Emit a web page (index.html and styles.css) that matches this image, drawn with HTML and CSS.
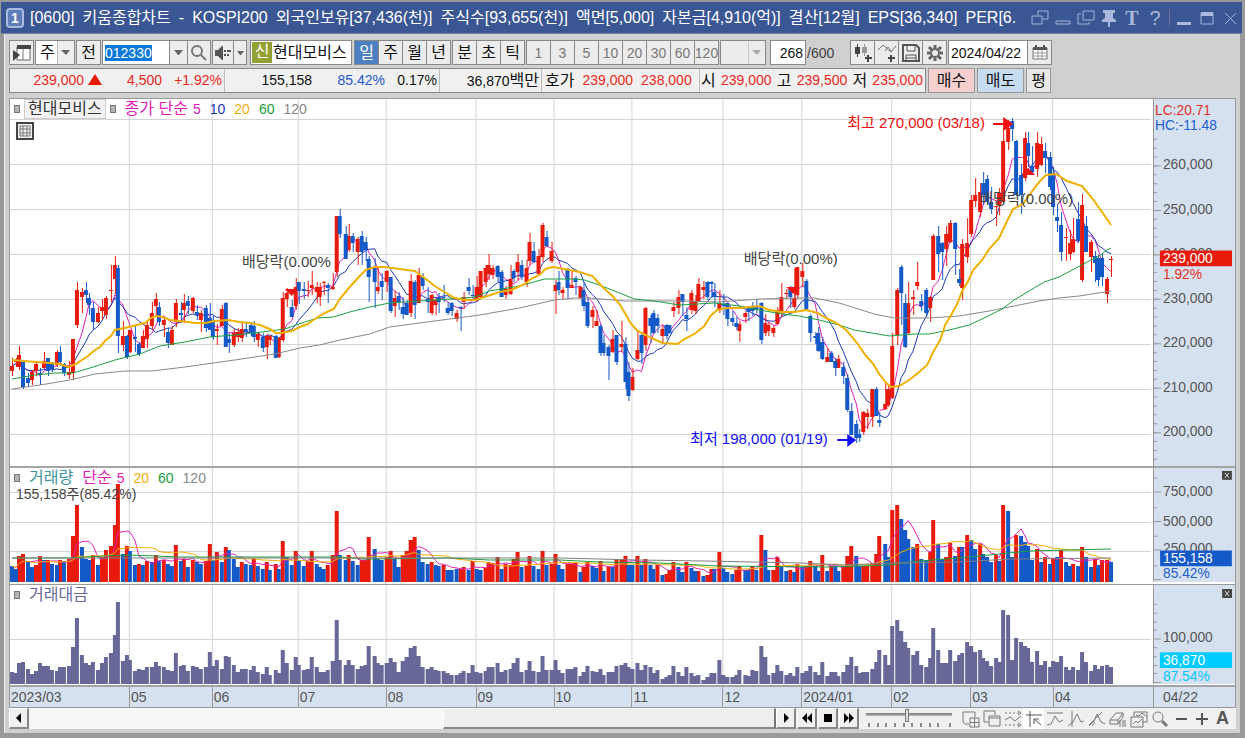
FILE: index.html
```html
<!DOCTYPE html>
<html lang="ko">
<head>
<meta charset="utf-8">
<title>[0600] 키움종합차트</title>
<link rel="stylesheet" href="styles.css">
</head>
<body>
<div class="window">
  <header class="titlebar">
    <span class="badge">1</span>
    <h1 class="title"><span>[0600]</span><span>키움종합차트</span><span>-</span><span>KOSPI200</span><span>외국인보유[37,436(천)]</span><span>주식수[93,655(천)]</span><span>액면[5,000]</span><span>자본금[4,910(억)]</span><span>결산[12월]</span><span>EPS[36,340]</span><span>PER[6.</span></h1>
    <div class="win-tools">
      <button aria-label="창 분리"><svg width="18" height="18" viewBox="0 0 18 18"><path d="M7 6V2h10v8h-5M1 7h10v8H1z"/></svg></button>
      <button aria-label="접기"><svg width="18" height="18" viewBox="0 0 18 18"><path d="M2 12h14v3H2z"/></svg></button>
      <button aria-label="창 복사"><svg width="18" height="18" viewBox="0 0 18 18"><path d="M6 2h11v9H6zM4 5H1v10h11v-2"/></svg></button>
      <button aria-label="고정"><svg width="18" height="18" viewBox="0 0 18 18"><path class="solid" d="M3 1h12v3h-2v5l3 2v2h-6v5H8v-5H2v-2l3-2V4H3z"/></svg></button>
      <button class="glyph serif">T</button>
      <button class="glyph">?</button>
      <span class="sep"></span>
      <button aria-label="최소화"><svg width="18" height="18" viewBox="0 0 18 18"><path class="solid" d="M2 13h14v3H2z"/></svg></button>
      <button aria-label="최대화"><svg width="18" height="18" viewBox="0 0 18 18"><path d="M3 4h12v11H3z"/><path class="solid" d="M3 3h12v4H3z"/></svg></button>
      <button aria-label="닫기"><svg width="18" height="18" viewBox="0 0 18 18"><path d="M4 4l11 11M15 4L4 15"/></svg></button>
    </div>
  </header>

  <main class="body">
    <div class="toolbar">
      <div class="group"><button class="w23" aria-label="패널"><svg width="20" height="18" viewBox="0 0 20 18"><path d="M5 3h13v13H5z" fill="#fff" stroke="#666"/><path d="M11 3v13" stroke="#777"/><path d="M5 1h14v4H5z" fill="#444"/><path d="M1 6l7 5-7 6z" fill="#444"/></svg></button></div>
      <div class="group combo"><select class="w38" aria-label="주기"><option>주</option></select><svg class="arrow" width="17" height="23" viewBox="0 0 17 23"><path d="M0 0h17v23H0z" fill="#efefef"/><path d="M0 0v23" stroke="#888"/><path d="M4 9h9l-4 5z" fill="#666"/></svg></div>
      <div class="group"><button class="w23">전</button></div>
      <div class="group">
        <input class="code" value="012330" aria-label="종목코드">
        <button class="w17" aria-label="목록"><svg width="11" height="10" viewBox="0 0 11 10"><path d="M1 2h9L6 7H5z" fill="#666"/></svg></button>
        <button class="w22" aria-label="검색"><svg width="18" height="18" viewBox="0 0 18 18" fill="none" stroke="#777" stroke-width="2"><circle cx="7" cy="7" r="5"/><path d="M11 11l5 5"/></svg></button>
      </div>
      <div class="group">
        <button class="w20" aria-label="소리"><svg width="18" height="16" viewBox="0 0 18 16"><path d="M1 5h3l4-4h1v14H8l-4-4H1z" fill="#555"/><path d="M11 5v2M11 9v2M14 5v2M14 9v2M16 5v2" stroke="#555" stroke-width="2"/></svg></button>
        <button class="w12" aria-label="소리 설정"><svg width="9" height="10" viewBox="0 0 9 10"><path d="M1 3h7L5 7H4z" fill="#666"/></svg></button>
      </div>
      <div class="group stock"><span class="new">신</span><span class="stock-name">현대모비스</span></div>
      <div class="group"><button class="w23 on">일</button><button class="w23">주</button><button class="w23">월</button><button class="w23">년</button></div>
      <div class="group"><button class="w23">분</button><button class="w23">초</button><button class="w23">틱</button></div>
      <div class="group nums"><button>1</button><button>3</button><button>5</button><button>10</button><button>20</button><button>30</button><button>60</button><button>120</button></div>
      <div class="group combo"><select class="w44" disabled aria-label="간격"><option></option></select><svg class="arrow" width="17" height="23" viewBox="0 0 17 23"><path d="M0 0v23" stroke="#aaa"/><path d="M4 9h9l-4 5z" fill="#aaa"/></svg></div>
      <div class="group count"><input value="268" aria-label="봉 개수"></div>
      <span class="total">/600</span>
      <div class="group">
        <button class="w23" aria-label="차트 추가"><svg width="20" height="20" viewBox="0 0 20 20"><path d="M2 4h5v7H2zM4 1h1v13H4z" fill="#444"/><path d="M9 4h5v6H9zM11 1h1v12h-1z" fill="#999"/><path d="M15 12v7M12 15h7" stroke="#444" stroke-width="2"/></svg></button>
        <button class="w23" aria-label="지표 추가"><svg width="20" height="20" viewBox="0 0 20 20"><path d="M1 7l5-5 8 7 5-6M8 8l3-4 4 5" fill="none" stroke="#777"/><path d="M14 12v7M11 15h7" stroke="#444" stroke-width="2"/></svg></button>
        <button class="w23" aria-label="저장"><svg width="20" height="20" viewBox="0 0 20 20" fill="none" stroke="#555" stroke-width="2"><path d="M2 2h13l3 3v13H2z"/><path d="M6 2v6h8V2M5 18v-6h10v6M5 15h10" stroke-width="1"/></svg></button>
        <button class="w23" aria-label="설정"><svg width="18" height="18" viewBox="0 0 18 18" fill="none" stroke="#666"><circle cx="9" cy="9" r="4" stroke-width="2"/><path d="M9 1v3M9 14v3M1 9h3M14 9h3M3 3l3 3M12 12l3 3M15 3l-3 3M6 12l-3 3" stroke-width="3"/></svg></button>
      </div>
      <div class="group"><input class="date" value="2024/04/22" aria-label="날짜"><button class="w23" aria-label="달력"><svg width="16" height="16" viewBox="0 0 16 16"><path d="M1 3h14v11H1z" fill="#fff" stroke="#777"/><path d="M1 8h14M1 11h14M6 5v9M10 5v9" fill="none" stroke="#999"/><path d="M1 2h14v3H1zM3 0h2v3H3zM11 0h2v3h-2z" fill="#555"/></svg></button></div>
    </div>

    <div class="quote-row">
      <div class="quote">
        <div class="seg seg-a up"><span>239,000 <i class="tri"></i></span><span>4,500</span><span>+1.92%</span></div>
        <div class="seg seg-b"><span>155,158</span><span class="down">85.42%</span><span>0.17%</span></div>
        <div class="seg seg-c"><span>36,870<b>백만</b></span></div>
        <div class="seg seg-d up"><b>호가</b><span>239,000</span><span>238,000</span></div>
        <div class="seg seg-e up"><b>시</b><span>239,000</span><b>고</b><span>239,500</span><b>저</b><span>235,000</span></div>
      </div>
      <button class="trade buy">매수</button>
      <button class="trade sell">매도</button>
      <button class="trade avg">평</button>
    </div>

    <section class="chart">
      <div class="plot">
        <svg id="price" height="367" viewBox="10 99 1144 367" preserveAspectRatio="none"></svg>
        <div class="legend"><i class="mark"></i><span class="boxed">현대모비스</span><i class="mark"></i><span class="ko c5">종가 단순</span><span class="c5 near">5</span><span class="c10">10</span><span class="c20">20</span><span class="c60">60</span><span class="c120">120</span></div>
        <button class="grid-btn" aria-label="표"><svg width="18" height="18" viewBox="0 0 18 18" fill="none" stroke="#444"><path d="M1 1h16v16H1z" stroke-width="2"/><path d="M4 4h10v10H4zM4 7h10M4 11h10M7 4v10M11 4v10" stroke="#777"/></svg></button>
        <span class="note high">최고 270,000 (03/18)</span>
        <span class="note low">최저 198,000 (01/19)</span>
        <span class="note ex1">배당락(0.00%</span>
        <span class="note ex2">배당락(0.00%)</span>
        <span class="note ex3">배당락(0.00%)</span>
      </div>
      <svg class="axis" id="price-axis" width="82" height="367" viewBox="0 99 82 367"></svg>

      <div class="plot line">
        <svg id="volume" height="116" viewBox="10 468 1144 116" preserveAspectRatio="none"></svg>
        <div class="legend"><i class="mark"></i><span class="ko vol">거래량</span><span class="ko c5">단순</span><span class="c5 near">5</span><span class="c20">20</span><span class="c60">60</span><span class="c120">120</span></div>
        <span class="vol-now">155,158주(85.42%)</span>
      </div>
      <svg class="axis line" id="volume-axis" width="82" height="116" viewBox="0 468 82 116"></svg>

      <div class="plot thin">
        <svg id="value" height="100" viewBox="10 585 1144 100" preserveAspectRatio="none"></svg>
        <div class="legend"><i class="mark"></i><span class="ko val">거래대금</span></div>
      </div>
      <svg class="axis thin" id="value-axis" width="82" height="100" viewBox="0 585 82 100"></svg>

      <div class="dates"><span>2023/03</span><span>05</span><span>06</span><span>07</span><span>08</span><span>09</span><span>10</span><span>11</span><span>12</span><span>2024/01</span><span>02</span><span>03</span><span>04</span></div>
      <div class="last-date">04/22</div>
    </section>

    <footer class="bottom">
      <button class="sb" aria-label="왼쪽"><svg width="8" height="10" viewBox="0 0 8 10"><path d="M6 0v10L1 5z"/></svg></button>
      <div class="track"><div class="thumb"></div></div>
      <button class="sb" aria-label="오른쪽"><svg width="8" height="10" viewBox="0 0 8 10"><path d="M2 0v10l5-5z"/></svg></button>
      <button class="sb" aria-label="뒤로"><svg width="12" height="10" viewBox="0 0 12 10"><path d="M6 0v10L1 5zM11 0v10L6 5z"/></svg></button>
      <button class="sb" aria-label="정지"><svg width="8" height="8" viewBox="0 0 8 8"><path d="M0 0h8v8H0z"/></svg></button>
      <button class="sb" aria-label="앞으로"><svg width="12" height="10" viewBox="0 0 12 10"><path d="M1 0v10l5-5zM6 0v10l5-5z"/></svg></button>
      <div class="speed"><input type="range" min="0" max="100" value="47" aria-label="속도"><svg width="86" height="5" viewBox="0 0 86 5"><path d="M3 0v4M12 0v4M20 0v4M29 0v4M38 0v4M46 0v4M55 0v4M64 0v4M72 0v4M84 0v4" stroke="#222"/></svg></div>
      <div class="tools">
        <button aria-label="새 차트"><svg width="18" height="18" viewBox="0 0 18 18"><path d="M7 14H3L1 12V2h12v5M8 8h9v9H8zM12.500 8v9M8 12.500h9"/></svg></button>
        <button aria-label="겹치기"><svg width="18" height="18" viewBox="0 0 18 18"><path d="M5 12H1V1h11v4M6 6h11v10H6zM6 8h11"/></svg></button>
        <button aria-label="영역"><svg width="18" height="18" viewBox="0 0 18 18"><path d="M1 3h16M1 15h16" stroke-dasharray="2 2"/><path d="M1 10l5-3 5 4 6-5M14 1l3 2-3 2M14 13l3 2-3 2"/></svg></button>
        <button class="pressed" aria-label="십자선"><svg width="18" height="18" viewBox="0 0 18 18"><path d="M1 5h16M5 1v16M16 15L9 9M9 14V9h5" stroke="#555"/></svg></button>
        <button aria-label="수평선"><svg width="18" height="18" viewBox="0 0 18 18"><path d="M1 3h16M1 15l4-1 4-8 4 6 4-2"/></svg></button>
        <button aria-label="수직선"><svg width="18" height="18" viewBox="0 0 18 18"><path d="M5 1v16M1 16l5-4 4-8 4 8 3-1"/></svg></button>
        <button aria-label="추세선"><svg width="18" height="18" viewBox="0 0 18 18"><path d="M1 15L14 2M1 16l5-5 3-7 4 8 4 2M4 16l3-4"/></svg></button>
        <button aria-label="지우개"><svg width="18" height="18" viewBox="0 0 18 18"><path d="M1 10l6-7h7l-5 7zM1 10v4h8v-4M9 14l5-7V3M11 10v7M14 10v7M16 10v7"/></svg></button>
        <button aria-label="차트 그림"><svg width="18" height="18" viewBox="0 0 18 18"><path d="M1 7h12v10H1zM4 7V2h13v10h-4M3 14l3-3 2 2 4-4M6 5l3 1 3-3 4 3"/></svg></button>
        <button aria-label="돋보기"><svg width="18" height="18" viewBox="0 0 18 18"><circle cx="7" cy="7" r="5"/><path d="M11 11l5 5" stroke-width="3"/></svg></button>
        <button aria-label="축소"><svg width="18" height="18" viewBox="0 0 18 18"><path d="M4 9h11" stroke="#555" stroke-width="2"/></svg></button>
        <button aria-label="확대"><svg width="18" height="18" viewBox="0 0 18 18"><path d="M3 9h12M9 3v12" stroke="#555" stroke-width="2"/></svg></button>
        <button class="auto">A</button>
      </div>
    </footer>
  </main>
</div>
<script src="chart.js"></script>
</body>
</html>
```
FILE: styles.css
```css
* { box-sizing: border-box; }
body { margin: 0; background: #989898; color: #111; font: 14px "Liberation Sans", "Noto Sans CJK KR", sans-serif; }
button, input, select { font: inherit; color: inherit; margin: 0; padding: 0; border-radius: 0; }
button { display: flex; align-items: center; justify-content: center; border: 0; background: none; }
svg { display: block; flex: none; }
b { font-weight: 400; }

.window { padding: 2px 0 5px; background: #999; }
.titlebar { display: flex; align-items: center; height: 32px; margin: 0 3px 0 1px; padding-left: 5px; background: #3a5693; color: #fff; border-bottom: 1px solid #7080a8; }
.badge { width: 18px; height: 20px; border: 2px solid #a9bbe0; border-radius: 4px; background: #5f7db8; font-weight: 700; line-height: 16px; text-align: center; flex: none; }
.title { display: flex; gap: 8px; flex: 1; min-width: 0; margin: 0 0 0 6px; font-size: 16px; font-weight: 400; line-height: 24px; white-space: nowrap; overflow: hidden; }
.title span { flex: none; }
.win-tools { display: flex; align-items: center; gap: 5px; padding: 0 3px 0 6px; color: #b0c0e2; }
.win-tools button { width: 18px; }
.win-tools svg { fill: none; stroke: #a3b3d8; }
.win-tools .solid { fill: #a9b8dc; stroke: none; }
.glyph { font-size: 20px; line-height: 22px; color: #a9b8dc; }
.serif { font-family: "Liberation Serif", serif; font-weight: 700; }
.sep { width: 1px; height: 18px; background: #776f98; }

.body { margin: 0 5px 0 4px; padding: 6px 4px 4px; background: #d0d0d0; border-left: 1px solid #eee; }
.toolbar { display: flex; align-items: center; gap: 1px; height: 25px; font-size: 16px; line-height: 20px; white-space: nowrap; }
.group { position: relative; display: flex; height: 25px; border: 1px solid #888; background: #888; gap: 1px; flex: none; }
.group button { background: #ececec; }
.group input { border: 0; background: #fff; outline: 0; }
.group select { border: 0; background: #fff; appearance: none; padding-left: 4px; }
.group select:disabled { background: #ececec; opacity: 1; }
.arrow { position: absolute; right: 0; top: 0; pointer-events: none; }
.w12 { width: 12px; } .w17 { width: 17px; } .w20 { width: 20px; } .w22 { width: 22px; }
.w23 { width: 23px; } .w38 { width: 38px; } .w44 { width: 44px; }
.group .code { width: 66px; color: #fff; font-size: 14px; background: linear-gradient(#0a78d8, #0a78d8) 2px 4px / 47px 16px no-repeat #fff; padding-left: 2px; }
.group.stock { background: #fff; width: 102px; margin: 0 1px 0 2px; align-items: center; overflow: hidden; }
.new { width: 20px; height: 21px; margin-left: 1px; background: #93a133; color: #fff; text-align: center; line-height: 20px; }
.group .on { background: #4d80c2; color: #fff; }
.nums button { width: 23px; color: #777; font-size: 14px; }
.group.count { margin-left: 3px; }
.count input { width: 34px; font-size: 14px; text-align: right; padding-right: 2px; }
.total { width: 42px; font-size: 14px; color: #444; }
.group .date { width: 78px; font-size: 14px; padding-left: 2px; }

.quote-row { display: flex; gap: 2px; height: 25px; margin-top: 3px; }
.quote { display: flex; width: 917px; background: #f0f0f0; border: 1px solid #888; line-height: 23px; white-space: nowrap; }
.seg { display: flex; flex: none; }
.seg + .seg { border-left: 1px solid #bbb; }
.seg span { text-align: right; flex: none; }
.seg b { color: #111; font-size: 16px; }
.up { color: #e8281a; }
.down { color: #2458d0; }
.tri { display: inline-block; border: 7px solid transparent; border-top: 0; border-bottom: 11px solid #e81808; }
.seg-a { width: 214px; }
.seg-a span { width: 92px; } .seg-a span + span { width: 60px; }
.seg-b { width: 215px; }
.seg-b span { width: 87px; } .seg-b span + span { width: 73px; } .seg-b span:last-child { width: 52px; }
.seg-c { width: 102px; justify-content: flex-end; padding-right: 2px; }
.seg-d { width: 158px; padding-left: 3px; gap: 8px; }
.seg-e { flex: 1; justify-content: space-between; padding: 0 2px 0 1px; }
.trade { width: 47px; border: 1px solid #999; font-size: 16px; line-height: 20px; }
.buy { background: #f5cfce; } .sell { background: #c6dcf0; } .avg { width: 25px; background: #e8e8e8; }

.chart { display: grid; grid-template-columns: 1fr 82px; margin-top: 5px; border: 1px solid #999; background: #fff; }
.plot { position: relative; min-width: 0; }
.plot > svg { width: 100%; }
.axis { background: #d6e1ef; border-left: 1px solid #999; font-size: 14px; }
.line, .dates, .last-date { border-top: 2px solid #a4a4a4; }
.thin { border-top: 1px solid #999; }
.legend { position: absolute; left: 4px; top: 0; display: flex; align-items: center; gap: 9px; line-height: 20px; white-space: nowrap; }
.mark { width: 6px; height: 8px; border: 1px solid #777; background: #b4b4b4; }
.ko { font-size: 16px; }
.boxed { font-size: 16px; padding: 0 3px; margin: 0 -5px; border: 1px solid #ccc; background: #f2f2f2; line-height: 18px; color: #333; }
.near { margin-left: -4px; }
.c5 { color: #df20b8; } .c10 { color: #1838b8; } .c20 { color: #f0b010; } .c60 { color: #18a040; } .c120 { color: #888; }
.vol { color: #3a959c; } .val { color: #686898; }
.grid-btn { position: absolute; left: 6px; top: 23px; background: #eee; }
.vol-now { position: absolute; left: 6px; top: 18px; color: #444; line-height: 16px; }
.note { position: absolute; font-size: 15px; line-height: 18px; color: #444; white-space: nowrap; }
.high { left: 73.25%; top: 15px; color: #f01010; }
.low { left: 59.5%; top: 331px; color: #1010f0; }
.ex1 { left: 20.3%; top: 154px; }
.ex2 { left: 64.2%; top: 151px; }
.ex3 { left: 84.8%; top: 91px; }
.dates { display: grid; grid-template-columns: 119fr 83fr 86fr 88fr 90fr 78fr 78fr 91fr 79fr 90fr 79fr 83fr 100fr; background: #d6e1ef; color: #555; line-height: 20px; }
.dates span { padding-left: 1px; min-width: 0; white-space: nowrap; }
.dates span + span { border-left: 1px solid #999; }
.last-date { border-left: 1px solid #999; padding-left: 9px; background: #d6e1ef; color: #555; line-height: 20px; }

.bottom { display: flex; height: 21px; background: #f0f0f0; }
.sb { width: 20px; margin-right: 1px; background: #f0f0f0; border: 1px solid #fff; border-right: 2px solid #888; border-bottom: 2px solid #888; }
.track { flex: 1; display: flex; background: #f8f8f8; padding-left: 413px; }
.thumb { flex: 1; background: #eee; border: 1px solid #fff; border-right: 2px solid #777; border-bottom: 2px solid #888; }
.speed { width: 86px; margin: 0 8px 0 6px; }
.speed input { display: block; width: 86px; height: 15px; appearance: none; background: linear-gradient(#777, #bbb) 0 5px / 100% 3px no-repeat; }
.speed input::-webkit-slider-thumb { appearance: none; width: 4px; height: 13px; background: #ddd; border: 1px solid #777; }
.tools { display: flex; padding-right: 3px; }
.tools button { width: 21px; }
.tools svg { fill: none; stroke: #777; }
.tools .pressed { background: #fff; }
.tools .auto { font-size: 18px; font-weight: 700; color: #555; }
```
FILE: chart.js
```js
// Per month: candles "x colour high,top,bottom,low", volume bars "colour height", turnover bar heights.
const months = [
{ c: `12r358,366,371,376 16r358,361,362,367 19r346,355,367,370 23b361,362,387,389 28b373,378,383,387 32r370,372,380,385 36r363,364,371,376 40b368,373,375,385 44r352,361,368,369 48b358,358,371,376 52b362,363,369,372 57r350,352,365,367 60b346,352,362,366 64b363,364,373,376 69r361,372,375,379 73r339,339,373,380 77r282,290,325,328 82r288,292,297,313 86b282,290,295,303 89b293,298,305,315 93b302,308,322,330 98r307,313,322,323 102r299,307,311,320 106r296,298,315,319 111r265,290,291,302 115r256,265,279,294 118b265,268,336,353 123r321,336,345,351 127b335,336,357,359`,
  v: `b16 b13 r26 r28 b20 b15 r17 r26 b22 r22 b18 b17 r22 b21 r23 r46 r77 b35 b23 b22 r27 b17 r25 r32 r36 r57 r98 b28 r36`,
  a: `12 11 21 22 15 10 13 21 18 18 14 13 17 17 18 37 66 29 21 19 22 14 21 27 31 49 82 23 29` },
{ c: `130r330,330,352,353 135b325,337,339,352 139b342,344,354,356 143r330,336,348,348 147r321,325,339,348 152r302,313,326,330 156r293,299,306,315 159b302,307,322,326 164r317,320,325,337 168b328,332,343,348 172r326,330,345,345 176r299,303,322,327 181b302,313,315,323 184r294,303,310,323 188b296,301,306,314 193r297,298,311,313 197b305,312,315,320 201r310,313,320,332 206b305,308,328,332 210b303,318,330,330`,
  v: `b31 b17 r18 b17 r21 b20 r27 b21 r22 b18 b16 r37 b21 r23 b15 r22 b20 b18 r21 r38`,
  a: `24 13 15 14 17 17 22 18 17 14 13 31 18 19 13 18 17 15 17 32` },
{ c: `213b316,321,337,340 217r324,329,331,345 222r305,309,326,326 226b302,303,347,347 229b333,339,343,353 234r329,333,345,347 238r328,332,337,342 242r322,329,338,342 246b323,329,332,337 251b322,325,332,336 254b321,326,337,342 258r332,334,340,347 263b333,337,348,352 267r334,336,347,359 270r335,336,340,345 276b335,336,358,358 279r337,338,357,358 283r292,298,340,342 287r288,293,299,307 292b300,307,317,317 296r278,287,306,310`,
  v: `b22 r30 b20 r35 b32 b23 b15 r20 b18 b17 r23 b16 b13 r20 b12 r18 b13 r41 b25 b17 r31`,
  a: `18 24 15 28 27 19 12 15 15 14 18 12 10 17 9 14 11 34 21 14 27` },
{ c: `299b282,282,291,304 304b282,289,291,299 308r281,290,291,297 312r271,285,288,295 317r282,287,292,303 320r283,287,297,306 324r281,282,283,295 328b283,285,288,303 333r273,287,289,290 337r216,216,272,277 340b209,216,234,238 346b226,234,259,259 349r224,236,250,252 353b233,236,243,252 358r237,239,252,265 362b231,236,252,265 366b237,242,250,261 369b256,259,277,302 375b258,267,282,308 378r268,287,291,294 382b273,281,287,300`,
  v: `b22 b16 r21 r31 b18 b15 b13 r17 r27 r71 b27 b22 r27 b21 b17 r22 r22 r45 b33 b23 b22`,
  a: `19 14 15 27 17 12 12 14 23 64 24 19 24 19 15 18 19 38 28 21 19` },
{ c: `387r270,271,282,292 391b277,277,311,313 395r291,298,306,317 399b292,296,302,310 403b297,307,314,319 407b300,303,315,315 411r274,281,313,317 415b280,282,305,319 419r268,275,303,303 423b273,277,286,290 428b287,299,302,313 432r294,295,313,315 436r297,300,305,315 439b293,297,302,313 444b285,297,298,302 448b302,308,313,315 452b302,303,311,316 457r310,313,319,322 461b306,307,308,331 464r292,297,302,309 469b278,287,291,295 473b285,295,296,299`,
  v: `r25 r31 b23 b15 r27 r31 r42 r45 b32 b20 b18 r20 b17 b16 r17 b12 b12 b13 r13 r15 b12 r21`,
  a: `21 26 22 12 23 27 36 38 28 17 15 17 14 13 13 11 9 9 11 13 11 19` },
{ c: `477r276,287,300,302 481r271,271,297,297 486r265,268,282,287 489r254,265,274,280 493r265,268,275,279 498b265,266,277,282 502b270,272,297,297 506r286,289,295,299 511r265,279,294,295 514b269,271,278,282 518r254,262,272,280 522b260,265,277,280 527r260,268,282,287 530r233,242,261,265 534b242,251,262,263 539r249,256,274,275 543r223,225,257,262 547b231,237,246,247 552r242,251,261,263`,
  v: `b13 b12 r14 r20 r19 r25 b13 r18 r17 r23 r30 b15 r16 r26 b16 b13 r31 b17 r18`,
  a: `12 11 13 17 17 21 12 14 15 21 26 12 14 23 13 12 28 14 14` },
{ c: `556r280,285,291,314 559b271,282,290,295 563r287,290,293,299 568b268,270,288,298 572r270,285,288,288 576b276,278,282,295 581r286,287,298,299 584b282,290,306,311 588b297,302,326,328 593r306,310,317,328 597r310,321,326,326 601b324,326,353,356 604b335,343,353,356 609b345,347,356,380 613r330,339,352,353 617b335,335,362,365 622r321,344,347,352 626b337,344,382,389 629b362,372,396,401`,
  v: `r28 b17 b13 r18 r18 r19 b10 r15 r20 b16 b14 r21 b11 r15 b15 r23 r23 r26 b17`,
  a: `24 14 11 15 15 17 8 12 18 13 12 15 9 12 12 18 19 21 17` },
{ c: `633r368,377,390,391 638r330,350,359,360 642b332,335,353,364 646r307,308,345,351 651b315,318,326,343 654b310,313,333,334 658b314,318,326,333 663r325,329,336,343 667b324,325,336,339 670b325,325,333,334 674r302,307,311,317 679r290,297,308,314 683b294,294,302,316 687b307,315,319,331 692r290,293,310,314 696r295,301,311,314 699r278,284,302,302 704r281,287,290,299 708b281,282,297,300 712b281,282,284,298 715b283,292,297,307 720r290,303,310,313`,
  v: `b17 r26 b17 r23 b17 b13 r17 b7 r8 r12 r20 b15 b10 r20 b14 b11 r11 b6 r7 r13 b13 r30`,
  a: `15 21 14 19 17 11 14 5 7 9 18 12 8 17 11 8 9 4 7 11 11 24` },
{ c: `724b294,304,306,315 728b303,303,319,326 733b311,318,322,326 737b317,323,327,330 740r321,324,331,342 746r311,313,317,323 749b306,307,312,321 753b302,306,311,316 757b299,307,310,313 762b302,303,340,344 766r314,323,333,336 769r322,325,331,336 774r326,328,333,337 778r307,310,324,324 782r283,297,312,317 787r289,293,294,299 791b286,287,297,308 795r268,298,307,309 798r267,267,295,299`,
  v: `b14 b10 b8 r12 r16 b12 b12 r16 b12 r47 b32 b12 r12 r25 b16 b11 r12 b10 r18`,
  a: `9 7 7 9 14 9 8 14 13 38 27 9 11 19 13 9 11 8 17` },
{ c: `803r263,271,277,287 807b279,281,311,311 811b314,316,333,342 816b332,336,338,344 819b327,333,351,352 823b337,342,359,360 828r348,357,362,362 832b351,353,362,362 836b358,361,368,376 839r355,359,368,368 844b362,367,376,384 848b374,378,410,412 852b403,411,435,435 857b420,424,438,443 860b429,434,438,442 864r411,412,432,435 868r409,413,417,429 873r389,389,417,427 877b387,389,416,416 880b412,420,423,427 886r383,404,409,410 889r384,389,405,407`,
  v: `b15 r16 r21 b16 b11 r27 b11 r16 b16 b11 r15 r26 r36 b26 b16 r16 r16 r19 r28 r46 b38 b25`,
  a: `11 13 18 12 9 22 8 12 12 8 12 19 27 18 11 12 12 15 22 34 29 19` },
{ c: `893r333,346,398,399 898r288,290,335,345 902b265,267,293,325 906b294,303,347,348 909r282,303,333,334 914r290,297,299,315 918r262,282,286,290 922b294,301,306,311 927b288,290,313,317 931r296,297,308,322 934r234,236,280,280 939b226,236,254,272 943b242,243,252,280 947r226,234,249,266 951r220,223,242,243 956b222,223,249,275 960b269,279,283,286 963r239,244,288,300 968r218,243,257,263`,
  v: `r72 r77 b63 b52 b43 b35 r38 b23 b22 r30 r62 b38 b23 r25 r39 b26 r35 b35 r47`,
  a: `58 64 53 42 36 29 33 19 17 26 56 34 21 21 34 23 29 31 42` },
{ c: `972r195,200,234,237 976r178,195,201,207 981r183,192,212,217 984b172,183,195,205 988b175,179,202,205 992b187,202,209,214 997r206,206,207,226 1000r188,193,205,215 1004r129,141,202,203 1009r120,128,142,150 1013b118,121,129,141 1017b140,141,195,196 1022b164,175,195,214 1026r132,138,178,181 1029b132,143,156,167 1033b146,166,172,175 1038r132,143,169,177 1042r137,144,165,166 1046b143,151,158,173 1051b152,157,187,190`,
  v: `b42 b33 r38 b28 b25 b20 r27 b21 r77 b71 b25 r47 b46 b40 b36 b22 r33 b20 r25 b18`,
  a: `38 32 34 26 23 18 26 22 74 69 24 46 42 38 36 22 33 19 23 17` },
{ c: `1054b167,175,207,215 1058b204,217,221,232 1062b212,225,252,261 1067r228,237,238,261 1071r230,243,254,260 1074r218,239,252,253 1079b202,219,241,243 1083r194,205,280,282 1087b216,226,252,252 1092r240,242,257,272 1096b251,256,263,282 1099b255,258,280,286 1103b253,258,277,286 1108r277,279,294,303 1112r256,259,260,277`,
  v: `r23 b25 r32 b20 b16 r18 b16 r35 b25 b15 r23 b17 r22 r22 b20`,
  a: `23 22 28 17 14 17 14 32 22 13 19 15 18 19 17` }
];

const RED = '#e81a0c', BLUE = '#1459c8';
const bars = [];
for (const m of months) {
  const v = m.v.split(' '), a = m.a.split(' ');
  m.c.split(' ').forEach((t, i) => {
    const [, x, k, rest] = t.match(/^(\d+)([rb])(.*)$/);
    const [hi, top, bot, lo] = rest.split(',').map(Number);
    const w = v[i] || v[v.length - 1];
    bars.push({ x: +x, up: k === 'r', hi, top, bot, lo, close: k === 'r' ? top : bot,
      vUp: w[0] === 'r', vol: +w.slice(1), val: +(a[i] || a[a.length - 1]) });
  });
}

const path = (d, attrs) => `<path d="${d}" ${attrs}/>`;
const line = (pts, color, w = 1) => `<polyline points="${pts}" fill="none" stroke="${color}" stroke-width="${w}" shape-rendering="crispEdges"/>`;
const average = (n, f) => bars.map((b, i) => {
  const s = bars.slice(Math.max(0, i - n + 1), i + 1);
  return `${b.x},${(s.reduce((t, q) => t + f(q), 0) / s.length).toFixed(1)}`;
}).join(' ');
const boundary = [129, 212, 298, 386, 476, 554, 632, 723, 802, 892, 971, 1053];
const grid = (ys, y0, y1) => path(boundary.map(x => `M${x} ${y0}h1V${y1}h-1z`).join('') + ys.map(y => `M10 ${y}h1142v1H10z`).join(''), 'fill="#d4d4d4"');
const rect = (x, y, w, h) => `M${x} ${y}h${w}v${h}h-${w}z`;
const put = (id, html) => { document.getElementById(id).innerHTML = html; };

let html = grid([119, 164, 209, 254, 299, 344, 389, 434], 99, 466);
html += line(average(5, b => b.close), '#e020b8') + line(average(10, b => b.close), '#1c38b4');
for (const up of [true, false]) {
  const d = bars.filter(b => b.up === up).map(b => rect(b.x, b.hi, 1, Math.max(1, b.lo - b.hi)) + rect(b.x - 2, b.top, 4, Math.max(1, b.bot - b.top))).join('');
  html += path(d, `fill="${up ? RED : BLUE}"`);
}
html += line('12,389 40,385 70,380 95,374 125,371 152,371 185,367 235,360 275,354 300,348 320,345 340,340 370,334 390,327 420,323 450,319 480,315 520,308 555,300 575,298 590,298 625,301 680,301 720,302 760,299 800,298 815,298 840,303 875,314 895,318 930,318 960,316 990,311 1015,306 1040,301 1060,298 1080,296 1112,291', '#888');
html += line('12,379 35,375 55,373 73,373 90,368 115,360 140,354 160,346 185,342 210,337 235,335 262,332 285,329 305,322 318,318 334,317 350,312 370,307 390,303 420,301 465,298 475,297 490,291 520,286 545,279 575,279 585,280 600,285 620,293 635,299 655,301 680,305 715,303 740,306 760,310 783,314 800,316 820,320 840,325 855,330 890,336 915,334 930,334 950,330 970,325 985,318 1003,309 1015,300 1030,291 1045,282 1060,277 1075,269 1090,261 1100,256 1108,250 1112,248', '#18a040');
html += `<polyline fill="none" stroke="#f0b000" stroke-width="2" points="12,360 24,361 36,362 50,363 60,364 68,367 76,364 82,360 88,356 95,350 100,347 106,340 111,336 115,330 125,328 133,326 145,323 151,318 156,316 163,317 170,320 180,321 195,323 205,323 215,321 228,320 240,322 250,323 260,325 270,329 276,333 282,333 292,331 300,327 308,324 315,319 325,313 334,309 340,299 350,287 360,276 366,270 374,267 385,267 400,269 415,271 425,278 435,286 445,292 455,298 465,300 475,300 485,297 500,292 512,290 525,284 533,278 540,275 546,269 553,267 565,269 580,272 593,276 602,286 613,296 620,304 626,314 631,323 638,331 650,337 663,343 678,344 685,339 695,334 705,326 711,316 718,310 728,308 740,308 750,307 760,306 770,310 783,312 795,312 807,310 818,313 827,318 837,323 847,330 857,342 866,355 874,364 880,374 887,383 892,387 900,386 910,380 920,372 928,365 934,352 941,340 946,325 952,315 958,304 963,291 968,283 974,270 983,260 990,249 1000,238 1007,223 1014,209 1024,204 1031,194 1040,182 1047,175 1057,174 1068,181 1083,186 1093,198 1103,212 1112,225"/>`;
html += path('M285 289h13l-6 7zM787 287h13l-6 7zM1022 175h14l-7-7zM994 123h10v-6l10 7-10 7v-6h-10z', 'fill="#f01010"');
html += path('M838 439h10v-5l9 6-9 7v-6h-10z', 'fill="#1010f0"');
put('price', html);

html = grid([492, 522, 551], 468, 584);
for (const up of [true, false]) html += path(bars.filter(b => b.vUp === up).map(b => rect(b.x - 2, 582 - b.vol, 4, b.vol)).join(''), `fill="${up ? RED : BLUE}"`);
html += line(average(5, b => 582 - b.vol), '#e020b8') + line(average(20, b => 582 - b.vol), '#f0b000');
html += line('12,558 70,558 105,556 130,555 180,557 340,557 365,559 450,558 490,560 560,560 600,562 660,563 720,566 830,567 890,565 920,561 960,558 1000,554 1030,551 1112,549', '#18a040');
html += line('12,558 560,558 640,560 705,561 802,563 845,565 892,563 958,562 1012,559 1112,558', '#808080');
put('volume', html);

put('value', grid([639], 585, 685) + path(bars.map(b => rect(b.x - 2, 684 - b.val, 4, b.val)).join(''), 'fill="#686898"'));

const label = (x, y, t, fill = '#555') => `<text x="${x}" y="${y}" fill="${fill}">${t}</text>`;
const ticks = (ys, w) => path(ys.map(y => `M0 ${y}h${w}v1H0z`).join(''), 'fill="#999"');
const closeBox = y => path(rect(69, y, 10, 9), 'fill="#444"') + path(`M72 ${y + 2}l4 5m0-5l-4 5`, 'stroke="#ddd"');
const badge = (y, color, text) => path(rect(6, y, 73, 16), `fill="${color}"`) + label(9, y + 13, text, '#fff');

const major = [164, 209, 254, 299, 344, 389, 434], minor = [];
for (let y = 137; y < 465; y += 9) minor.push(y);
put('price-axis', ticks(minor, 3) + ticks(major, 7) + major.map((y, i) => label(9, y + 4, `${260 - i * 10},000`)).join('')
  + label(1, 113, 'LC:20.71', '#e03028') + label(1, 128, 'HC:-11.48', '#2060d0')
  + badge(250, RED, '239,000') + label(9, 279, '1.92%', '#e83020'));
put('volume-axis', ticks([478, 508, 537, 567], 3) + ticks([492, 522, 551, 581], 7)
  + label(9, 497, '750,000') + label(9, 527, '500,000') + label(9, 554, '250,000')
  + badge(552, BLUE, '155,158') + label(9, 580, '85.42%', '#2060d0') + closeBox(471));
put('value-axis', ticks([604, 613, 622, 630, 648, 657, 666, 674], 3) + ticks([639, 683], 7)
  + label(9, 643, '100,000') + badge(653, '#00ccff', '36,870') + label(9, 682, '87.54%', '#00c8ff') + closeBox(589));
```
